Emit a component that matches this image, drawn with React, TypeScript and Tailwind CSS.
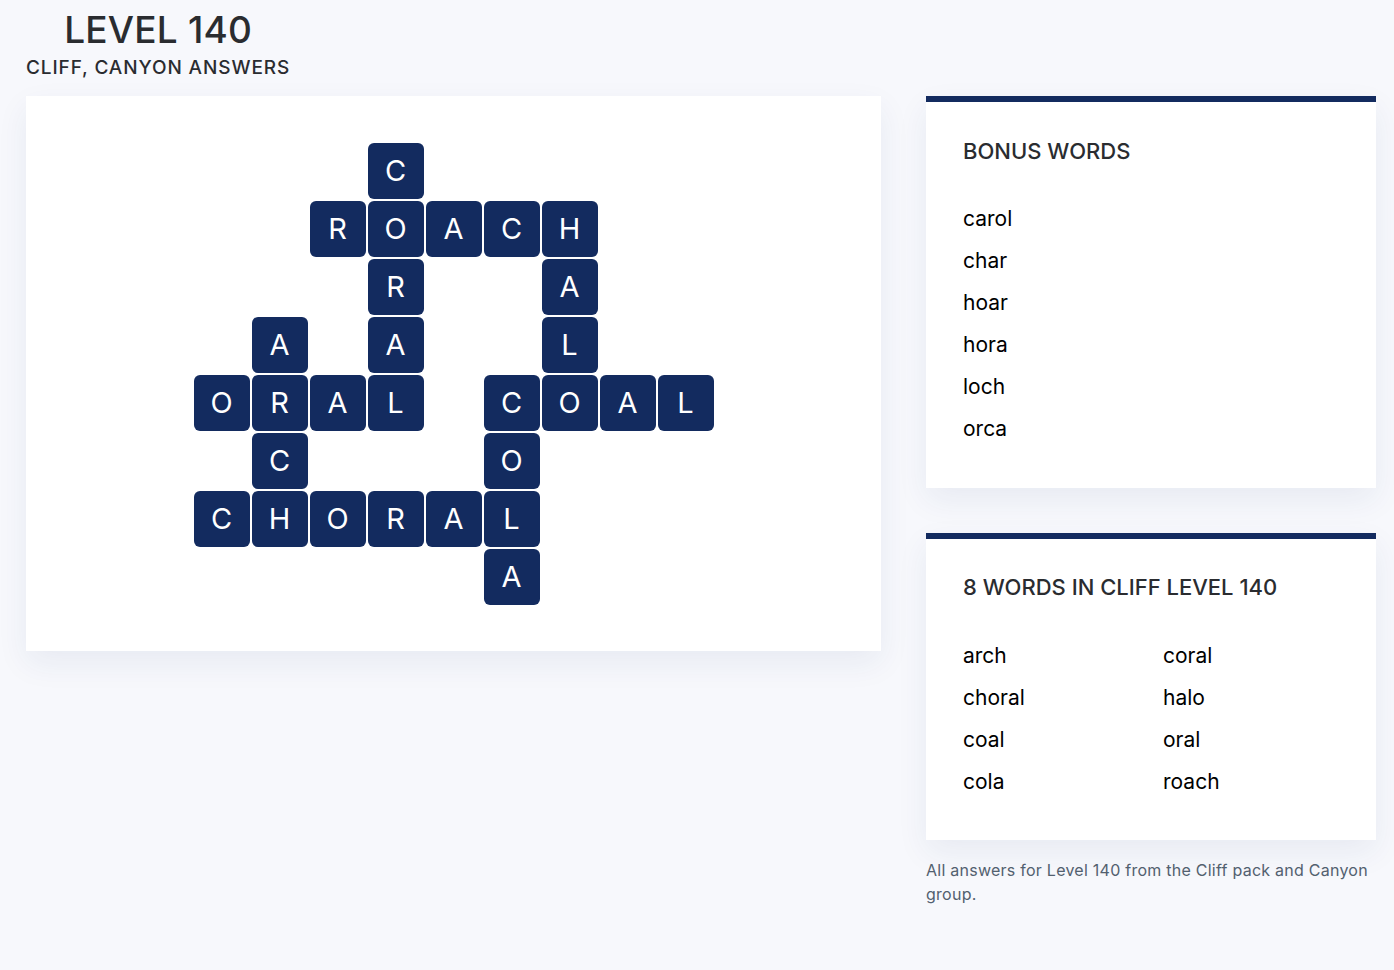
const GRID = [
  '...C.....',
  '..ROACH..',
  '...R..A..',
  '.A.A..L..',
  'ORAL.COAL',
  '.C...O...',
  'CHORAL...',
  '.....A...',
]

const BONUS = ['carol', 'char', 'hoar', 'hora', 'loch', 'orca']
const WORDS = ['arch', 'coral', 'choral', 'halo', 'coal', 'oral', 'cola', 'roach']

export default function App() {
  return (
    <div className="min-h-screen bg-[#f7f8fc] pl-[26px] pr-[18px] font-['Inter','Liberation_Sans',sans-serif] text-[#2a2c30]">
      {/* Titre */}
      <div className="inline-flex flex-col items-center pt-[10px]">
        <h1 className="text-[37px] leading-[40px] font-medium tracking-[0.2px]">LEVEL 140</h1>
        <p className="mt-[6px] text-[19px] leading-[24px] font-medium tracking-[0.9px]">CLIFF, CANYON ANSWERS</p>
      </div>

      <div className="mt-[16px] flex gap-[45px] items-start">
        {/* Plateau */}
        <div className="w-[855px] h-[555px] shrink-0 bg-white shadow-[0_12px_30px_rgba(30,50,110,0.07)] flex items-center justify-center">
          <div className="grid grid-cols-[repeat(9,56px)] grid-rows-[repeat(8,56px)] gap-[2px]">
            {GRID.flatMap((row, r) =>
              row.split('').map((ch, c) =>
                ch === '.' ? (
                  <div key={`${r}-${c}`} />
                ) : (
                  <div
                    key={`${r}-${c}`}
                    className="rounded-[6px] bg-[#132b5f] text-white text-[29px] flex items-center justify-center"
                  >
                    {ch}
                  </div>
                )
              )
            )}
          </div>
        </div>

        {/* Colonne droite */}
        <div className="w-[450px] shrink-0 flex flex-col">
          <div className="bg-white border-t-[6px] border-[#132b5f] px-[37px] pt-[35px] pb-[38px] shadow-[0_12px_30px_rgba(30,50,110,0.07)]">
            <h2 className="text-[22px] leading-[28px] font-medium">BONUS WORDS</h2>
            <ul className="mt-[33px] text-black">
              {BONUS.map(w => (
                <li key={w} className="text-[21px] leading-[42px]">{w}</li>
              ))}
            </ul>
          </div>

          <div className="mt-[45px] bg-white border-t-[6px] border-[#132b5f] px-[37px] pt-[34px] pb-[37px] shadow-[0_12px_30px_rgba(30,50,110,0.07)]">
            <h2 className="text-[22px] leading-[28px] font-medium">8 WORDS IN CLIFF LEVEL 140</h2>
            <ul className="mt-[34px] grid grid-cols-2 gap-x-[24px] text-black">
              {WORDS.map(w => (
                <li key={w} className="text-[21px] leading-[42px]">{w}</li>
              ))}
            </ul>
          </div>

          <p className="mt-[18px] text-[16px] leading-[24px] tracking-[0.25px] text-[#52606f]">
            All answers for Level 140 from the Cliff pack and Canyon group.
          </p>
        </div>
      </div>
    </div>
  )
}
